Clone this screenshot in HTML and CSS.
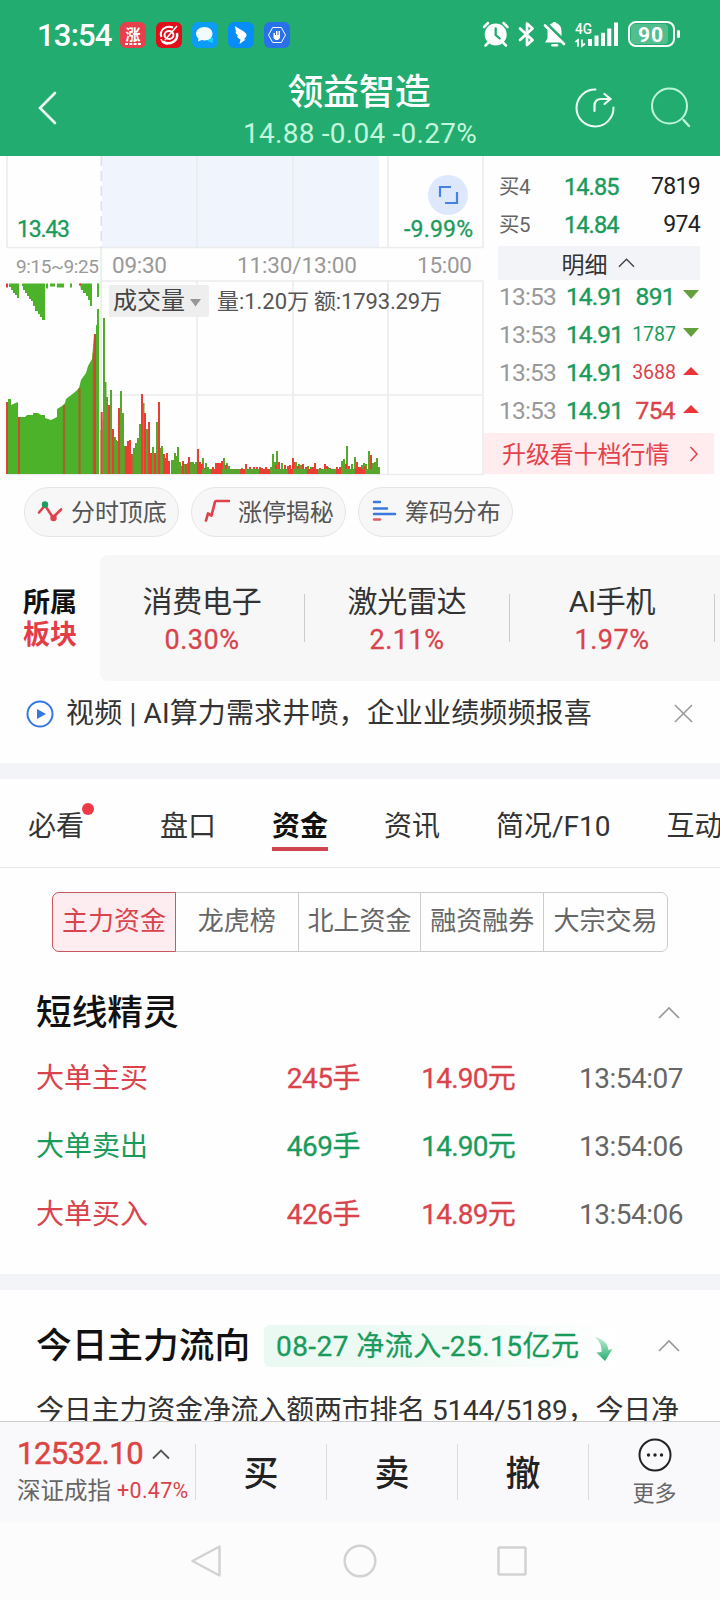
FILE: index.html
```html
<!DOCTYPE html>
<html lang="zh-CN">
<head>
<meta charset="utf-8">
<title>领益智造</title>
<link rel="stylesheet" href="styles.css">
</head>
<body>
<div class="phone">
  <header class="header">
    <div class="status">
      <span class="clock">13:54</span>
      <div class="apps">
        <svg class="app" viewBox="0 0 26 26"><rect width="26" height="26" rx="6" fill="#e5404b"/><text x="13" y="17.500" text-anchor="middle" font-size="15" font-weight="700" fill="#fff">涨</text><path d="M5 22h16" stroke="#fff" stroke-width="2" stroke-dasharray="3 1.300"/></svg>
        <svg class="app" viewBox="0 0 26 26"><rect width="26" height="26" rx="6" fill="#e20d18"/><g fill="none" stroke="#fff"><path d="M17 5.500C9 2.500 3 9 5.500 15" stroke-width="2"/><path d="M21 11c1.500 8-7 13-14 8.500" stroke-width="2.500"/><ellipse cx="13" cy="13" rx="4.500" ry="4" stroke-width="2"/><path d="M21 4L9 18" stroke-width="1.600"/><path d="M5 17c1 3 4 5 7 5" stroke-width="1.500"/></g></svg>
        <svg class="app" viewBox="0 0 26 26"><rect width="26" height="26" rx="6" fill="#0a9cf6"/><path d="M15 16h6v5l-3-1c-2 0-3-2-3-4z" fill="#19cffa"/><path d="M12.500 5c5 0 8 3 8 6.800s-3 6.700-8 6.700c-1 0-2 0-2.800-.4L6 19.500l.5-3C5 15.300 4 13.700 4 11.800 4 8 7.500 5 12.500 5z" fill="#f1faff"/></svg>
        <svg class="app" viewBox="0 0 26 26"><rect width="26" height="26" rx="6" fill="#078df8"/><path d="M7 4c3 2.500 8 4 11 7.500.8 1 .7 2-.2 3.500l-2 2.500h2L11.500 22l1-4.500c-2-.8-3-1.800-3.500-3.500l1.500.3C8.500 12.500 7.500 11 7.500 9.500l1 .3C7.500 8 7 6 7 4z" fill="#fff"/></svg>
        <svg class="app" viewBox="0 0 26 26"><rect width="26" height="26" rx="6" fill="#2871e8"/><path d="M8.700 5.500h8.600L21.500 13l-4.200 7.500H8.700L4.500 13z" fill="none" stroke="#fff"/><path d="M9.500 11h1.500v2h1V9h1.500v4h1V9H16v7l-2 2h-2.500l-2-2z" fill="#fff"/></svg>
      </div>
      <svg class="sysicons" viewBox="0 0 202 32" width="202" height="32">
        <g fill="none" stroke="#fff" stroke-linecap="round">
          <circle cx="15.700" cy="15.500" r="11" fill="#fff" stroke="none"/>
          <path d="M4 8l4-4M23.500 4l4 4" stroke-width="2.500"/><path d="M8 24l-2.500 2.500M23.500 24l2.500 2.500" stroke-width="2.500"/>
          <path d="M15.700 9.500v6.500l4 3.500" stroke="#22ac6f" stroke-width="2.300"/>
          <path d="M40 9.500l12.500 11.500-5.500 5V4.500l5.500 5L40 21" stroke-width="2.700" stroke-linejoin="round"/>
          <path d="M65 23.500h19l-2.500-4v-7c0-5-2.500-7.500-5-8.200-.3-1.700-3.700-1.700-4 0-2.700.7-5 3.200-5 8.200v7z" fill="#fff" stroke="none"/>
          <path d="M72.500 26.300h4.500" stroke-width="2.500"/><path d="M66 4l20 19.500" stroke="#22ac6f" stroke-width="3" stroke-linecap="butt"/><path d="M65 6.500l19 18.500" stroke-width="2.600"/>
          <path d="M110 20v7M116.500 16.500v10.500M123 13.700v13.300M129.300 9.500v17.500M136 3.500v23.500" stroke-width="4" stroke-linecap="butt"/>
          <path d="M98 27v-6l-2 1.500M102 21v6l2.500-2" stroke-width="1.700"/>
          <rect x="149" y="3" width="45" height="24" rx="7" stroke-width="2"/>
          <path d="M198.500 12.500v5" stroke-width="3"/>
        </g>
        <rect x="151" y="5" width="37" height="20" rx="4" fill="#fff" opacity=".22"/>
        <text x="95" y="15" font-size="15" font-weight="500" textLength="17" lengthAdjust="spacingAndGlyphs" fill="#fff">4G</text>
        <text x="158" y="22.500" font-size="21" font-weight="700" textLength="25" fill="#fff">90</text>
      </svg>
    </div>
    <div class="titlebar">
      <svg class="back" viewBox="0 0 24 36"><path d="M20 4L5 19l15 15" fill="none" stroke="#f0fff7" stroke-width="2.600" stroke-linecap="round"/></svg>
      <div class="heading"><h1>领益智造</h1><p>14.88 -0.04 -0.27%</p></div>
      <div class="actions">
        <svg viewBox="0 0 42 42" width="42" height="42"><g fill="none" stroke="#effff7" stroke-width="2" stroke-linecap="round"><path d="M21.500 3.500A18.500 18.500 0 1 0 39.500 21.500"/><path d="M20.500 25v-5q0-7 7-7h8M30.500 8l6 5-6 5" stroke-width="2.200"/></g></svg>
        <svg viewBox="0 0 42 42" width="42" height="42"><g fill="none" stroke="#bcf5da" stroke-width="2" stroke-linecap="round"><circle cx="20.500" cy="20" r="17.500"/><path d="M34.500 34l5.500 6" stroke-width="2.400"/></g></svg>
      </div>
    </div>
  </header>

  <section class="market">
    <svg class="chart" viewBox="0 156 484 320" width="484" height="320">
      <rect x="102" y="156" width="277" height="91" fill="#eff4fd"/>
      <g fill="none" stroke="#ececef" stroke-width="1.600">
        <path d="M7 156V247.500H483V156M197 156V247M293 156V247M388 156V247"/>
        <path d="M102 281H483V474.500H7M197 281V474M293 281V474M388 281V474M102 395H483"/>
        <path d="M101.300 248V474"/><path d="M101.300 156V248" stroke="#dfe1e7" stroke-dasharray="10 5"/>
      </g>
      <g fill="#4bb229">
        <path d="M9 283.500H19V298H17V295H15V293H13V290H11V287H9z"/>
        <path d="M22 283.500H45V320H42V317H40V314H38V311H35V306H33V301H31V299H29V296H27V293H25V290H23V286H22z"/>
        <path d="M46 283.500h2v5h-2zM50 283.500h5v3h-5zM57 283.500h7v4h-7zM70 283.500h2v4h-2zM80 283.500H92V306H90V300H88V296H86V293H83V290H81zM97 283.500h2V297h-2z"/>
        <path d="M6.500 402H8V399H11V405L18 402V417L25 417L27 415H33V413H38L41 415H45V418L51 420L57 417V409L62 406L65 403L66 399L75 392L79 388L81 380L86 373L88 366L92 359L94 334H96V325H97V309H99V474H6.500z"/>
      </g>
      <path d="M7 283.500v4M80 283.500v2" stroke="#df3c33" stroke-width="2"/>
      <path d="M7 402V474M19 417V474" stroke="#df3c33" stroke-width="1.800"/>
      <path d="M64 405V474M79.500 388V474" stroke="#a2662d" stroke-width="2.200"/>
      <path d="M93.500 353V474" stroke="#a2662d" stroke-width="1.500"/><path d="M95 334V474" stroke="#df3c33" stroke-width="1.800"/>
      <g fill="none" stroke-width="2">
        <path stroke="#739330" d="M103.500 420V474M107 397V474M112 440V474M114 445V474M116 440V474M121 418V474M123 425V474M125 446V474M141 434V474M143.500 430V474M146 440V474M148 448V474M154 460V474M158 440V474M160 448V474M180 464V474M182 466V474M188 463V474M190 464V474M194 464V474"/>
        <path stroke="#55a82b" d="M104 318V474M105.500 382V474M111 390V474M115 437V474M117 441V474M121 391V474M123 413V474M134 448V474M136 443V474M138 438V474M140 424V474M143.500 403V474M147 429V474M153 447V474M157 422V474M162 446V474M172 460V474M174 460V474M175 453V474M177 456V474M178 447V474M180 462V474M184 464V474M191 462V474M193 462V474M196 462V474M203 458V474M206 463V474M208 467V474M224 458V474M227 463V474M229 466V474M242 468V474M269 469V474M271 467V474M273 454V474M275 462V474M277 451V474M282 463V474M296 462V474M299 464V474M301 465V474M308 466V474M311 467V474M315 466V474M328 467V474M342 461V474M344 459V474M347 446V474M352 464V474M355 457V474M362 465V474M364 463V474M366 464V474M369 451V474M373 463V474M375 462V474M377 458V474M379 467V474"/>
        <path stroke="#eb3d34" d="M101.700 412V474M109 405V474M113 429V474M119 408V474M126 446V474M128 441V474M130 440V474M142 394V474M145 413V474M149 422V474M151 453V474M155 453V474M159 402V474M164 454V474M166 458V474M167 453V474M169 461V474M183 461V474M186 464V474M189 457V474M198 449V474M200 462V474M202 464V474M213 467V474M216 463V474M218 463V474M220 463V474M222 461V474M226 465V474M246 464V474M250 467V474M254 467V474M257 467V474M260 467V474M262 468V474M266 467V474M276 465V474M279 462V474M285 465V474M288 466V474M290 465V474M293 458V474M294 462V474M298 466V474M303 464V474M306 467V474M313 467V474M315 463V474M320 468V474M325 464V474M327 466V474M330 468V474M337 467V474M340 467V474M346 464V474M349 466V474M357 462V474M359 467V474M361 467V474M365 466V474M371 455V474"/>
        <path stroke="#9a712d" d="M101.500 430V474M132 454V474M187 466V474M205 468V474M209 469V474"/>
      </g>
      <path d="M202 471.500H379" stroke="#5aa52d" stroke-width="5"/>
      <path d="M211 471.500H365" stroke="#eb3d34" stroke-width="5" stroke-dasharray="11 18 5 14"/>
      <path d="M101 248V405" stroke="#e8f4e5" stroke-width="1.500"/>
      <rect x="109" y="285" width="100" height="32" rx="2" fill="#eee"/>
      <path d="M190 299h11l-5.500 7.500z" fill="#979797"/>
      <circle cx="448" cy="195" r="20" fill="#dee8fc"/>
      <path d="M440 197v-10h11M457 192v11h-12" fill="none" stroke="#4583e2" stroke-width="2.200"/>
      <g font-size="23" fill="#1a9b5c" stroke="#1a9b5c" stroke-width=".3"><text x="17" y="237" textLength="53">13.43</text><text x="404" y="237" textLength="69">-9.99%</text></g>
      <g font-size="22.500" fill="#999"><text x="16" y="273" font-size="19" textLength="83">9:15~9:25</text><text x="112" y="273" textLength="55">09:30</text><text x="237" y="273" textLength="120">11:30/13:00</text><text x="417" y="273" textLength="55">15:00</text></g>
      <g fill="#444"><text x="113" y="309" font-size="24" textLength="72">成交量</text><text x="217" y="309" font-size="22" fill="#555" textLength="92">量:1.20万</text><text x="314" y="309" font-size="22" fill="#555" textLength="128">额:1793.29万</text></g>
    </svg>
    <div class="quotes">
      <div class="bid"><span>买4</span><b>14.85</b><i>7819</i></div>
      <div class="bid"><span>买5</span><b>14.84</b><i>974</i></div>
      <div class="detail">明细<svg viewBox="0 0 18 12"><path d="M1 10l8-8 8 8" fill="none" stroke="#444" stroke-width="1.500"/></svg></div>
      <div class="ticks">
        <div class="tick"><span>13:53</span><b>14.91</b><i>891</i><em class="down"></em></div>
        <div class="tick"><span>13:53</span><b>14.91</b><i class="small">1787</i><em class="down"></em></div>
        <div class="tick"><span>13:53</span><b>14.91</b><i class="small red">3688</i><em class="up"></em></div>
        <div class="tick"><span>13:53</span><b>14.91</b><i class="red">754</i><em class="up"></em></div>
      </div>
      <div class="upgrade"><span>升级看十档行情</span><svg viewBox="0 0 10 18"><path d="M1.500 2l6.500 7-6.500 7" fill="none" stroke="#e3424a" stroke-width="1.500"/></svg></div>
    </div>
  </section>

  <div class="pills">
    <div class="pill"><svg viewBox="0 0 26 26"><path d="M2 13.500l6-7 8 12 8-8" fill="none" stroke="#e0424c" stroke-width="2.600" stroke-linecap="round" stroke-linejoin="round"/><circle cx="8" cy="5.500" r="3.200" fill="#15a05e"/><circle cx="16.500" cy="19" r="3.200" fill="#e0424c"/></svg><span>分时顶底</span></div>
    <div class="pill"><svg viewBox="0 0 26 26"><path d="M2 21.500l2-7 3.500 2L11 3q.3-1 1.300-1H25" fill="none" stroke="#e0424c" stroke-width="2.700" stroke-linecap="round" stroke-linejoin="round"/></svg><span>涨停揭秘</span></div>
    <div class="pill"><svg viewBox="0 0 26 26"><g fill="none" stroke="#3b78df" stroke-width="2.500" stroke-linecap="round"><path d="M3 3h6M3 9.500h13M3 15h21"/><path d="M3 20.500h6" stroke="#e45b64"/></g></svg><span>筹码分布</span></div>
  </div>

  <section class="sectors">
    <div class="sector-title">所属<span>板块</span></div>
    <div class="sector-list">
      <div class="sector"><span>消费电子</span><b>0.30%</b></div>
      <div class="sector"><span>激光雷达</span><b>2.11%</b></div>
      <div class="sector"><span>AI手机</span><b>1.97%</b></div>
    </div>
  </section>

  <div class="news">
    <svg class="play" viewBox="0 0 28 28"><circle cx="14" cy="14" r="12.500" fill="none" stroke="#3478e0" stroke-width="2"/><path d="M11 9l9 5-9 5z" fill="#3478e0"/></svg>
    <span>视频 | AI算力需求井喷，企业业绩频频报喜</span>
    <svg class="close" viewBox="0 0 20 20"><path d="M1 1l18 18M19 1L1 19" stroke="#999" stroke-width="1.600"/></svg>
  </div>
  <div class="band"></div>
  <nav class="tabs">
    <span>必看<i class="dot"></i></span><span>盘口</span><span class="active">资金</span><span>资讯</span><span>简况/F10</span><span>互动</span>
  </nav>
  <div class="segments"><span class="on">主力资金</span><span>龙虎榜</span><span>北上资金</span><span>融资融券</span><span>大宗交易</span></div>

  <section class="alerts">
    <div class="section-head"><h2>短线精灵</h2><svg class="caret" viewBox="0 0 22 14"><path d="M1 12L11 2l10 10" fill="none" stroke="#999" stroke-width="1.700"/></svg></div>
    <div class="alert red"><span>大单主买</span><b>245手</b><b>14.90元</b><time>13:54:07</time></div>
    <div class="alert green"><span>大单卖出</span><b>469手</b><b>14.90元</b><time>13:54:06</time></div>
    <div class="alert red"><span>大单买入</span><b>426手</b><b>14.89元</b><time>13:54:06</time></div>
  </section>
  <div class="band"></div>
  <section class="flow">
    <div class="section-head"><h2>今日主力流向</h2>
      <div class="chip"><span>08-27 净流入-25.15亿元</span><svg viewBox="0 0 20 26"><defs><linearGradient id="drop" x2="0" y2="1"><stop stop-color="#c5eed9"/><stop offset="1" stop-color="#27ae6e"/></linearGradient></defs><path d="M2 1C10 3 14.500 7 15.500 14l4-1-7.500 12L3.500 16.500l5-.5C9 9 6 5 2 1z" fill="url(#drop)"/></svg></div>
      <svg class="caret" viewBox="0 0 22 14"><path d="M1 12L11 2l10 10" fill="none" stroke="#999" stroke-width="1.700"/></svg></div>
    <p>今日主力资金净流入额两市排名 5144/5189，今日净</p>
  </section>

  <footer class="trade">
    <div class="index"><div class="index-value">12532.10<svg viewBox="0 0 18 12"><path d="M1 10.500l8-8 8 8" fill="none" stroke="#555" stroke-width="1.800"/></svg></div><div class="index-name">深证成指<b>+0.47%</b></div></div>
    <div class="action">买</div><div class="action">卖</div><div class="action">撤</div>
    <div class="more"><svg viewBox="0 0 36 36"><circle cx="18" cy="18" r="15.500" fill="none" stroke="#222" stroke-width="2"/><g fill="#222"><circle cx="11.500" cy="18" r="1.700"/><circle cx="18" cy="18" r="1.700"/><circle cx="24.500" cy="18" r="1.700"/></g></svg>更多</div>
  </footer>
  <div class="sysnav">
    <svg viewBox="0 0 34 36"><path d="M28.500 3.500v29L1.500 18z" stroke-linejoin="round"/></svg>
    <svg viewBox="0 0 34 36"><circle cx="17" cy="18" r="15.300"/></svg>
    <svg viewBox="0 0 34 36"><rect x="3.500" y="4.500" width="27" height="27" rx="1"/></svg>
  </div>
</div>
</body>
</html>
```

FILE: styles.css
```css
* { box-sizing: border-box; }
body, h1, h2, p { margin: 0; }
b, i, em { font-weight: 400; font-style: normal; }
svg { display: block; flex: none; }
.phone { width: 720px; height: 1600px; overflow: hidden; display: flex; flex-direction: column; background: #fefefe; color: #333; font-family: Roboto, "Noto Sans CJK SC", sans-serif; white-space: nowrap; }
.phone > * { flex: none; }
.red { color: #d9434b; }
.green { color: #1a9b5c; }

.header { height: 156px; background: #22ac6f; color: #fff; }
.status { height: 64px; padding: 6px 34px 0 37px; display: flex; align-items: center; }
.clock { width: 83px; font-size: 31px; font-weight: 500; letter-spacing: -.8px; line-height: 36px; padding-top: 1px; }
.apps { display: flex; gap: 10px; }
.app { width: 26px; height: 26px; }
.sysicons { margin-left: auto; margin-right: 4px; }
.titlebar { height: 92px; padding: 0 29px 0 35px; display: grid; grid-template-columns: 154px 1fr 160px; }
.back { width: 24px; height: 36px; margin-top: 25px; }
.heading { text-align: center; }
.heading h1 { font-size: 36px; line-height: 44px; margin-top: 7px; font-weight: 500; letter-spacing: -.2px; padding-right: 2px; }
.heading p { font-size: 28px; line-height: 34px; margin-top: 2px; letter-spacing: .25px; color: #c3f7de; }
.actions { display: flex; justify-content: flex-end; gap: 33px; margin-top: 22px; }

.market { height: 320px; display: flex; }
.quotes { width: 230px; padding-top: 12px; }
.bid { height: 38px; line-height: 38px; display: grid; grid-template-columns: 65px 70px 1fr; padding: 0 14px 0 15px; font-size: 23px; }
.bid span { font-size: 20.500px; color: #666; letter-spacing: -.5px; }
.bid b { color: #1a9b5c; letter-spacing: -.9px; font-size: 23.500px; -webkit-text-stroke: .4px #1a9b5c; }
.bid i { text-align: right; color: #222; letter-spacing: -.7px; }
.detail { margin: 2px 14px 0; height: 34px; background: #f3f4f8; display: flex; align-items: center; justify-content: center; gap: 10px; font-size: 23px; padding-right: 2px; }
.detail svg { width: 17px; height: 12px; }
.tick { height: 38px; line-height: 33px; display: grid; grid-template-columns: 67px 56px 53px 26px; align-items: start; padding-left: 15px; font-size: 24.500px; }
.tick span { color: #999; letter-spacing: -.8px; }
.tick b { color: #1a9b5c; letter-spacing: -.9px; -webkit-text-stroke: .4px #1a9b5c; }
.tick i { text-align: right; color: #1a9b5c; letter-spacing: -.6px; -webkit-text-stroke: .4px currentColor; }
.tick i.small { font-size: 19.500px; letter-spacing: 0; margin-right: -1px; -webkit-text-stroke: 0; }
.tick i.red { color: #d9434b; }
.tick em { border: 8px solid transparent; border-bottom-width: 0; margin: 10px 0 0 8px; width: 16px; }
.tick .down { border-top: 9px solid #639f3c; }
.tick .up { border-top: 0; border-bottom: 8px solid #ec3538; margin-top: 11px; }
.upgrade { height: 41px; margin-top: 1px; background: #feecef; color: #e3424a; padding: 0 15px 0 18px; display: flex; align-items: center; justify-content: space-between; font-size: 24px; letter-spacing: -.1px; }
.upgrade span { padding-bottom: 2px; }
.upgrade svg { width: 10px; height: 18px; }

.pills { height: 79px; padding: 11px 24px 0; display: flex; gap: 12px; }
.pill { width: 155px; height: 50px; border: 1px solid #e5e5e5; border-radius: 25px; background: #f7f7f7; display: flex; align-items: center; gap: 8px; padding-left: 12px; font-size: 24px; letter-spacing: -.1px; color: #555; }
.pill span { padding-bottom: 4px; }
.pill svg { width: 26px; height: 26px; }

.sectors { height: 126px; display: flex; }
.sector-title { width: 100px; padding: 32px 0 0 23px; font-size: 27px; line-height: 32px; font-weight: 700; color: #111; }
.sector-title span { display: block; color: #e33d48; }
.sector-list { width: 620px; background: #f7f7f7; border-radius: 8px 0 0 8px; display: flex; overflow: hidden; }
.sector { width: 205px; flex: none; height: 48px; margin-top: 39px; border-right: 1px solid #ccc; display: flex; flex-direction: column; align-items: center; }
.sector span { font-size: 30px; line-height: 38px; margin-top: -11px; letter-spacing: -.3px; }
.sector b { font-size: 27px; line-height: 38px; color: #d9434b; letter-spacing: .5px; -webkit-text-stroke: .3px #d9434b; }

.news { height: 82px; padding: 0 27px 17px 26px; display: flex; align-items: center; font-size: 28px; }
.news span { margin-left: 12px; padding-top: 1px; line-height: 40px; letter-spacing: .15px; }
.play { width: 28px; height: 28px; }
.close { width: 19px; height: 19px; margin-left: auto; }
.band { height: 16px; background: #f3f4f8; }

.tabs { height: 89px; border-bottom: 1px solid #e8e8e8; display: flex; font-size: 28px; padding: 24px 0 0 28px; overflow: hidden; }
.tabs span { height: 48px; line-height: 48px; position: relative; margin-right: 56px; flex: none; }
.tabs span:first-child { margin-right: 76px; }
.tabs .active { font-weight: 700; color: #111; border-bottom: 4px solid #cf4650; }
.dot { position: absolute; left: 54px; top: 0; width: 12px; height: 12px; border-radius: 50%; background: #ed3945; }
.segments { width: 616px; height: 60px; margin: 24px 0 0 52px; display: grid; grid-template-columns: repeat(5, 1fr); border: 1px solid #ccc; border-radius: 7px; font-size: 26px; line-height: 56px; color: #666; text-align: center; }
.segments span { border-right: 1px solid #ccc; }
.segments span:last-child { border: 0; }
.segments .on { margin: -1px 0 -1px -1px; line-height: 56px; border: 1px solid #c95762; border-radius: 7px 0 0 7px; background: #feedf0; color: #d9434b; }

.alerts { height: 322px; padding: 35px 36px 0; }
.section-head { display: flex; align-items: center; height: 52px; }
.section-head h2 { font-size: 35.700px; line-height: 50px; font-weight: 500; color: #111; }
.caret { width: 22px; height: 14px; margin-left: auto; margin-right: 4px; }
.alert { height: 68px; line-height: 66px; display: grid; grid-template-columns: 170px 154px 155px 168px; font-size: 28px; padding-top: 7px; }
.alert b { text-align: right; letter-spacing: -.5px; -webkit-text-stroke: .3px currentColor; }
.alert b + b { letter-spacing: -.75px; }
.alert time { text-align: right; color: #666; letter-spacing: -.5px; }
.flow { height: 131px; padding: 30px 36px 0; overflow: hidden; }
.flow .section-head h2 { width: 228px; }
.chip { height: 42px; width: 352px; padding-left: 12px; border-radius: 6px; display: flex; align-items: center; gap: 14px; background: linear-gradient(90deg, #eaf9f2, #f1fbf6 60%, #fff); color: #1a9b5c; font-size: 28px; letter-spacing: .45px; -webkit-text-stroke: .3px #1a9b5c; }
.chip span { padding-bottom: 4px; }
.chip svg { width: 20px; height: 26px; margin-top: 5px; }
.flow p { font-size: 28px; line-height: 40px; margin-top: 19px; letter-spacing: -.2px; }

.trade { height: 101px; background: #f9f9fc; border-top: 1px solid #ccc; display: flex; align-items: center; }
.index { width: 196px; height: 56px; border-right: 1px solid #ddd; padding-left: 17px; }
.index-value { margin-top: -9px; font-size: 31px; line-height: 38px; color: #dc4541; letter-spacing: -.5px; -webkit-text-stroke: .5px #dc4541; display: flex; align-items: center; gap: 9px; }
.index-value svg { width: 18px; height: 12px; }
.index-name { display: flex; align-items: center; gap: 6px; font-size: 23.500px; line-height: 36px; color: #666; }
.index-name b { font-size: 21.500px; color: #d9434b; letter-spacing: .3px; }
.action { width: 131px; height: 56px; border-right: 1px solid #ddd; text-align: center; font-size: 35px; line-height: 62px; font-weight: 500; color: #222; }
.more { width: 131px; display: flex; flex-direction: column; align-items: center; font-size: 22px; line-height: 30px; color: #666; gap: 6px; padding-top: 2px; }
.more svg { width: 36px; height: 36px; }
.sysnav { height: 78px; background: #fcfcfc; display: flex; justify-content: center; gap: 118px; align-items: center; }
.sysnav svg { width: 34px; height: 36px; fill: none; stroke: #d2d2d2; stroke-width: 2.500; }
```
